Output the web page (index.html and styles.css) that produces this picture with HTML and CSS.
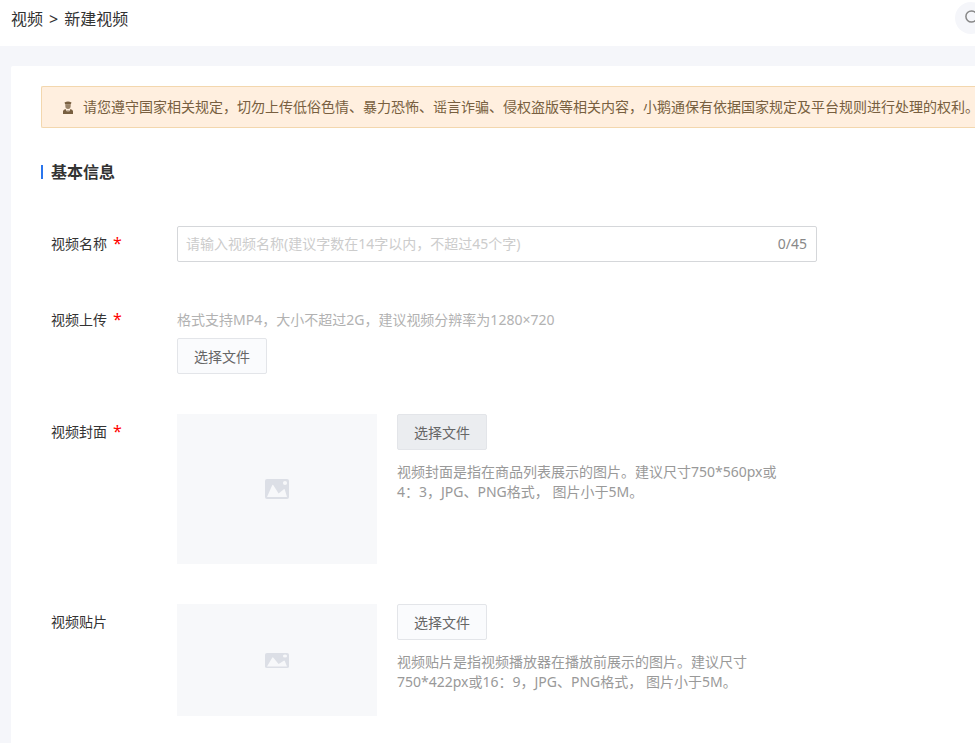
FILE: index.html
```html
<!DOCTYPE html>
<html lang="zh-CN">
<head>
<meta charset="utf-8">
<meta name="viewport" content="width=device-width, initial-scale=1">
<title>新建视频</title>
<link rel="stylesheet" href="styles.css">
</head>
<body>
<svg class="sprite" aria-hidden="true">
  <symbol id="picture" viewBox="0 0 24 20" preserveAspectRatio="none">
    <path fill="#dcdfe6" d="M2 0h20a2 2 0 0 1 2 2v16a2 2 0 0 1-2 2H2a2 2 0 0 1-2-2V2a2 2 0 0 1 2-2z"/>
    <circle cx="20" cy="4" r="2.1" fill="#f7f8fa"/>
    <path fill="#f7f8fa" d="M2 18 7.200 6.200Q7.700 5.200 8.400 6.200L13.600 14.600 18.800 10.200Q19.400 9.800 19.800 10.600L22 18z"/>
  </symbol>
</svg>
<header class="topbar">
  <nav class="breadcrumb" aria-label="面包屑">
    <a href="#">视频</a><span class="separator">&gt;</span><span>新建视频</span>
  </nav>
  <button class="search" type="button" aria-label="搜索">
    <svg width="16" height="16" viewBox="0 0 16 16" fill="none" stroke="#888" stroke-width="1.500"><circle cx="6.500" cy="6.500" r="5.600"/><path d="m10.600 10.600 4 4"/></svg>
  </button>
</header>
<main class="panel">
  <div class="notice">
    <svg width="12" height="14" viewBox="0 0 12 14" fill="#785f40" aria-hidden="true">
      <path d="M2.500 2.400Q6 .6 9.500 2.400L8.800 4.200H3.200z"/>
      <path opacity=".75" d="M3.300 4.200h5.400v1.600a2.700 3.200 0 0 1-5.400 0z"/>
      <path d="M1 14V11.200Q1 9.700 3.500 9L5.200 12 5.700 10h.6l.5 2 1.700-3Q11 9.700 11 11.200V14z"/>
    </svg>
    <span>请您遵守国家相关规定，切勿上传低俗色情、暴力恐怖、谣言诈骗、侵权盗版等相关内容，小鹅通保有依据国家规定及平台规则进行处理的权利。</span>
  </div>
  <h2 class="section-title">基本信息</h2>
  <form class="form">
    <div class="row">
      <label class="label required" for="name">视频名称</label>
      <div class="text-field">
        <input id="name" type="text" maxlength="45" placeholder="请输入视频名称(建议字数在14字以内，不超过45个字)">
        <span class="counter">0/45</span>
      </div>
    </div>
    <div class="row">
      <label class="label required" for="video">视频上传</label>
      <div class="upload">
        <p class="hint">格式支持MP4，大小不超过2G，建议视频分辨率为1280×720</p>
        <button class="button" id="video" type="button">选择文件</button>
      </div>
    </div>
    <div class="row">
      <label class="label required" for="cover">视频封面</label>
      <div class="media">
        <div class="preview cover"><svg class="picture-icon"><use href="#picture"/></svg></div>
        <div class="details">
          <button class="button active" id="cover" type="button">选择文件</button>
          <p class="description">视频封面是指在商品列表展示的图片。建议尺寸750*560px或<br>4：3，JPG、PNG格式， 图片小于5M。</p>
        </div>
      </div>
    </div>
    <div class="row">
      <label class="label" for="patch">视频贴片</label>
      <div class="media">
        <div class="preview patch"><svg class="picture-icon short"><use href="#picture"/></svg></div>
        <div class="details">
          <button class="button" id="patch" type="button">选择文件</button>
          <p class="description">视频贴片是指视频播放器在播放前展示的图片。建议尺寸<br>750*422px或16：9，JPG、PNG格式， 图片小于5M。</p>
        </div>
      </div>
    </div>
  </form>
</main>
</body>
</html>
```
FILE: styles.css
```css
* {
  box-sizing: border-box;
}

body {
  margin: 0;
  min-height: 100vh;
  overflow-x: hidden;
  background: #f5f6fa;
  color: #333;
  font: 14px/20px "Noto Sans", "Noto Sans CJK SC", sans-serif;
}

p,
h2 {
  margin: 0;
}

button,
input {
  font: inherit;
}

.sprite {
  position: absolute;
  width: 0;
  height: 0;
}

.topbar {
  display: flex;
  justify-content: space-between;
  height: 46px;
  padding-left: 11px;
  background: #fff;
  overflow: hidden;
}

.breadcrumb {
  display: flex;
  gap: 6px;
  padding-top: 9px;
  font-size: 16px;
}

.breadcrumb a {
  color: inherit;
  text-decoration: none;
}

.search {
  display: flex;
  align-items: center;
  flex: none;
  width: 32px;
  height: 32px;
  margin: 2px -12px 0 0;
  padding: 0 0 0 10px;
  border: 0;
  border-radius: 50%;
  background: #f5f6fa;
}

.search svg {
  flex: none;
}

.panel {
  min-height: calc(100vh - 66px);
  margin: 20px 0 0 11px;
  padding: 20px 0 27px 30px;
  background: #fff;
  border-top-left-radius: 2px;
}

.notice {
  display: flex;
  align-items: center;
  gap: 9px;
  height: 42px;
  padding-left: 20px;
  border: 1px solid #f3d7ae;
  border-right: 0;
  border-radius: 2px 0 0 2px;
  background: #ffefdf;
  color: #785f40;
  white-space: nowrap;
}

.notice svg {
  flex: none;
}

.section-title {
  display: flex;
  align-items: center;
  gap: 8px;
  margin-top: 34px;
  font-size: 16px;
  line-height: 20px;
}

.section-title::before {
  content: "";
  width: 2px;
  height: 14px;
  background: #2a75ed;
}

.form {
  display: grid;
  gap: 40px;
  margin-top: 44px;
  padding-left: 10px;
}

.row {
  display: grid;
  grid-template-columns: 126px minmax(0, 640px);
}

.label {
  padding-top: 8px;
}

.required::after {
  content: "*";
  margin-left: 6px;
  color: #f00;
  font-size: 16px;
  line-height: 1;
}

.text-field {
  display: flex;
  align-items: center;
  height: 36px;
  padding: 0 9px 0 8px;
  border: 1px solid #d5d7da;
  border-radius: 2px;
}

.text-field input {
  flex: 1;
  min-width: 0;
  padding: 0;
  border: 0;
  outline: 0;
  background: none;
  color: #333;
}

.text-field input::placeholder {
  color: #ccc;
}

.counter {
  color: #888;
}

.upload {
  padding-top: 8px;
}

.hint {
  margin-bottom: 8px;
  color: #b2b2b2;
}

.button {
  display: block;
  width: 90px;
  height: 36px;
  padding: 2px 0 0;
  border: 1px solid #e3e5e9;
  border-radius: 2px;
  background: #fafbfd;
  color: #666;
}

.button.active {
  background: #ebedf0;
}

.media {
  display: flex;
  gap: 20px;
}

.preview {
  display: flex;
  align-items: center;
  justify-content: center;
  flex: none;
  width: 200px;
  background: #f7f8fa;
}

.cover {
  height: 150px;
}

.patch {
  height: 112px;
}

.picture-icon {
  width: 24px;
  height: 20px;
}

.picture-icon.short {
  height: 15px;
}

.description {
  margin-top: 12px;
  color: #999;
}
```
